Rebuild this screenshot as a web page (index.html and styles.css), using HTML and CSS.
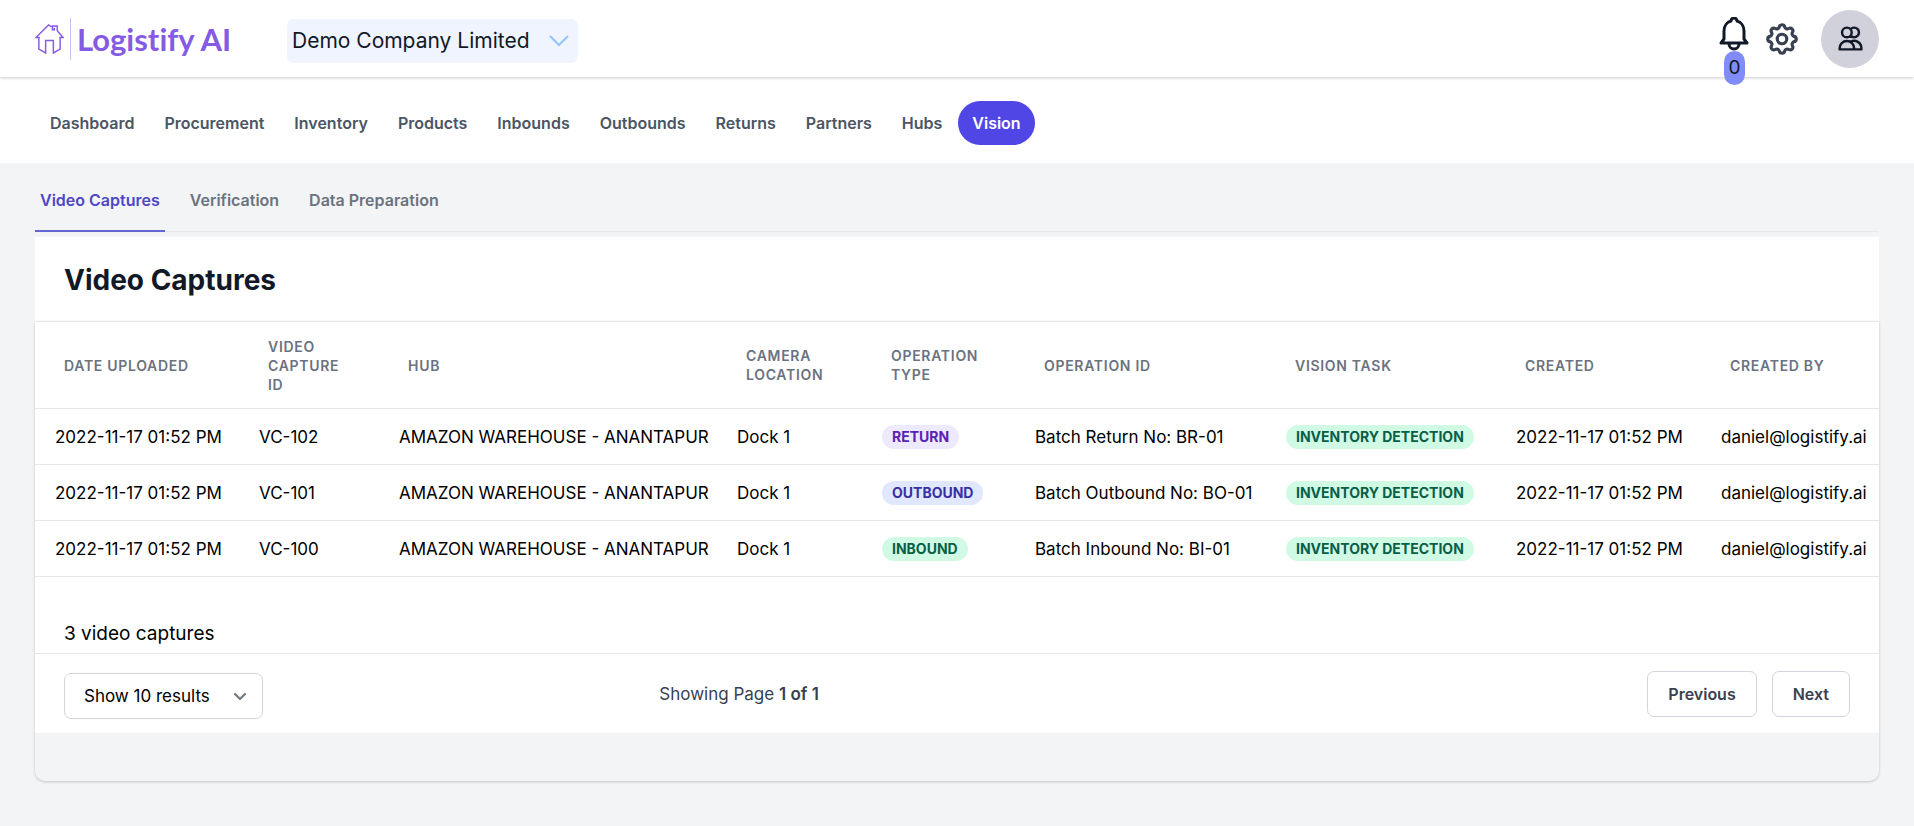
FILE: index.html
```html
<!DOCTYPE html>
<html lang="en">
<head>
  <meta charset="UTF-8">
  <title>Video Captures - Logistify AI</title>
  <meta name="viewport" content="width=device-width, initial-scale=1">
  <link rel="stylesheet" href="styles.css">
</head>
<body>
  <header class="topbar">
    <a class="logo" href="#">
      <svg class="logo-house" viewBox="0 0 30 32" fill="none" stroke="currentColor" stroke-width="1.5">
        <path d="M4 15v12l7 4V18h8v13l7-4V15M5 15H1L14 2l3 2M25 15h4l-6-7V3h-5v4h2V5"/>
      </svg>
      <span class="logo-line"></span>
      <span class="logo-text">Logistify AI</span>
    </a>
    <div class="company">
      <select class="company-select" aria-label="Company">
        <option>Demo Company Limited</option>
      </select>
      <svg class="company-arrow" viewBox="0 0 20 12" fill="none" stroke="currentColor" stroke-width="2"><path d="M1 1l9 9 9-9"/></svg>
    </div>
    <div class="actions">
      <button class="bell" aria-label="Notifications">
        <svg class="bell-icon" viewBox="0 0 30 34" fill="none" stroke="currentColor" stroke-width="3" stroke-linecap="round" stroke-linejoin="round">
          <path d="M2 26l3-4v-8c0-5 3-9 7-10a3 3 0 0 1 6 0c4 1 7 5 7 10v8l3 4zM10 27a5 5 0 0 0 10 0"/>
        </svg>
        <span class="bell-count">0</span>
      </button>
      <button class="gear" aria-label="Settings">
        <svg class="gear-icon" viewBox="0 0 24 24" fill="none" stroke="currentColor" stroke-width="2" stroke-linecap="round" stroke-linejoin="round">
          <path d="M10.325 4.317c.426-1.756 2.924-1.756 3.35 0a1.724 1.724 0 0 0 2.573 1.066c1.543-.94 3.31.826 2.37 2.37a1.724 1.724 0 0 0 1.065 2.572c1.756.426 1.756 2.924 0 3.35a1.724 1.724 0 0 0-1.066 2.573c.94 1.543-.826 3.31-2.37 2.37a1.724 1.724 0 0 0-2.572 1.065c-.426 1.756-2.924 1.756-3.35 0a1.724 1.724 0 0 0-2.573-1.066c-1.543.94-3.31-.826-2.37-2.37a1.724 1.724 0 0 0-1.065-2.572c-1.756-.426-1.756-2.924 0-3.35a1.724 1.724 0 0 0 1.066-2.573c-.94-1.543.826-3.31 2.37-2.37.996.608 2.296.07 2.572-1.065z"/>
          <circle cx="12" cy="12" r="3"/>
        </svg>
      </button>
      <button class="avatar" aria-label="Account">
        <svg class="avatar-icon" viewBox="0 0 24 24" fill="none" stroke="currentColor" stroke-width="2" stroke-linecap="round" stroke-linejoin="round">
          <path d="M12 4.354a4 4 0 1 1 0 5.292M15 21H3v-1a6 6 0 0 1 12 0v1zm0 0h6v-1a6 6 0 0 0-9-5.197M13 7a4 4 0 1 1-8 0 4 4 0 0 1 8 0z"/>
        </svg>
      </button>
    </div>
  </header>

  <nav class="nav">
    <a href="#">Dashboard</a>
    <a href="#">Procurement</a>
    <a href="#">Inventory</a>
    <a href="#">Products</a>
    <a href="#">Inbounds</a>
    <a href="#">Outbounds</a>
    <a href="#">Returns</a>
    <a href="#">Partners</a>
    <a href="#">Hubs</a>
    <a href="#" class="active">Vision</a>
  </nav>

  <main class="content">
    <nav class="tabs">
      <a href="#" class="active">Video Captures</a>
      <a href="#">Verification</a>
      <a href="#">Data Preparation</a>
    </nav>

    <div class="title-box">
      <h1>Video Captures</h1>
    </div>

    <section class="card">
      <table class="captures">
        <colgroup>
          <col class="col-date">
          <col class="col-id">
          <col class="col-hub">
          <col class="col-camera">
          <col class="col-type">
          <col class="col-operation">
          <col class="col-task">
          <col class="col-created">
          <col class="col-by">
        </colgroup>
        <thead>
          <tr>
            <th>Date Uploaded</th>
            <th>Video Capture ID</th>
            <th>Hub</th>
            <th>Camera Location</th>
            <th>Operation Type</th>
            <th>Operation ID</th>
            <th>Vision Task</th>
            <th>Created</th>
            <th>Created By</th>
          </tr>
        </thead>
        <tbody>
          <tr>
            <td>2022-11-17 01:52 PM</td>
            <td>VC-102</td>
            <td>AMAZON WAREHOUSE - ANANTAPUR</td>
            <td>Dock 1</td>
            <td><span class="badge purple">RETURN</span></td>
            <td>Batch Return No: BR-01</td>
            <td><span class="badge green">INVENTORY DETECTION</span></td>
            <td>2022-11-17 01:52 PM</td>
            <td>daniel@logistify.ai</td>
          </tr>
          <tr>
            <td>2022-11-17 01:52 PM</td>
            <td>VC-101</td>
            <td>AMAZON WAREHOUSE - ANANTAPUR</td>
            <td>Dock 1</td>
            <td><span class="badge indigo">OUTBOUND</span></td>
            <td>Batch Outbound No: BO-01</td>
            <td><span class="badge green">INVENTORY DETECTION</span></td>
            <td>2022-11-17 01:52 PM</td>
            <td>daniel@logistify.ai</td>
          </tr>
          <tr>
            <td>2022-11-17 01:52 PM</td>
            <td>VC-100</td>
            <td>AMAZON WAREHOUSE - ANANTAPUR</td>
            <td>Dock 1</td>
            <td><span class="badge green">INBOUND</span></td>
            <td>Batch Inbound No: BI-01</td>
            <td><span class="badge green">INVENTORY DETECTION</span></td>
            <td>2022-11-17 01:52 PM</td>
            <td>daniel@logistify.ai</td>
          </tr>
        </tbody>
      </table>

      <p class="total">3 video captures</p>

      <div class="pager">
        <div class="page-size">
          <select class="page-size-select" aria-label="Results per page">
            <option>Show 10 results</option>
          </select>
          <svg class="page-size-arrow" viewBox="0 0 14 9" fill="none" stroke="currentColor" stroke-width="2" stroke-linecap="round" stroke-linejoin="round"><path d="M2 2l5 5 5-5"/></svg>
        </div>
        <p class="page-info">Showing Page <b>1 of 1</b></p>
        <div class="page-buttons">
          <button>Previous</button>
          <button>Next</button>
        </div>
      </div>
    </section>
  </main>
</body>
</html>
```
FILE: styles.css
```css
* {
  box-sizing: border-box;
}
body {
  margin: 0;
  background: #f3f4f6;
  color: #000;
  font-family: Inter, "Liberation Sans", sans-serif;
  font-size: 17px;
  line-height: 24px;
}
a {
  text-decoration: none;
}
button, select {
  font: inherit;
  cursor: pointer;
}
h1, p {
  margin: 0;
}

/* top bar */
.topbar {
  position: relative;
  display: flex;
  align-items: center;
  height: 77px;
  padding: 0 35px;
  background: #fff;
  box-shadow: 0 1px 3px rgba(0, 0, 0, 0.2);
}
.logo {
  display: flex;
  align-items: center;
  width: 252px;
  color: #865be4;
}
.logo-house {
  width: 29px;
  height: 31px;
}
.logo-line {
  width: 1px;
  height: 42px;
  margin: 0 6px;
  background: #cdbdf3;
}
.logo-text {
  font-family: Lato, sans-serif;
  font-size: 31px;
  font-weight: 700;
  font-variant-ligatures: none;
  line-height: 40px;
}
.company {
  position: relative;
  margin-top: 5px;
}
.company-select {
  appearance: none;
  width: 291px;
  height: 44px;
  padding: 0 5px;
  border: none;
  border-radius: 7px;
  background: #eff4ff;
  color: #111827;
  font-size: 21px;
}
.company-arrow {
  position: absolute;
  right: 9px;
  top: 16px;
  width: 20px;
  height: 12px;
  color: #93c5fd;
  pointer-events: none;
}
.actions {
  display: flex;
  align-items: center;
  margin-left: auto;
}
.actions button {
  padding: 0;
  border: none;
  background: none;
}
.actions .bell {
  position: relative;
  height: 34px;
  margin: 0 14px 10px 0;
  color: #111827;
}
.bell-icon {
  display: block;
  width: 30px;
  height: 34px;
}
.bell-count {
  position: absolute;
  top: 34px;
  left: 5px;
  width: 21px;
  border-radius: 11px;
  background: #818cf8;
  font-size: 19px;
  line-height: 34px;
}
.actions .gear {
  margin-right: 20px;
  color: #374151;
}
.gear-icon {
  display: block;
  width: 38px;
  height: 38px;
}
.actions .avatar {
  display: flex;
  align-items: center;
  justify-content: center;
  width: 58px;
  height: 58px;
  border-radius: 50%;
  background: #d1d1db;
  color: #111827;
}
.avatar-icon {
  width: 29px;
  height: 29px;
}

/* main navigation */
.nav {
  display: flex;
  gap: 2px;
  padding: 24px 36px 18px;
  background: #fff;
}
.nav a {
  padding: 10px 14px;
  border-radius: 22px;
  color: #4b5563;
  font-size: 16px;
  font-weight: 600;
}
.nav a.active {
  background: #4f46e5;
  color: #fff;
}

.content {
  padding: 0 35px 46px;
}
.tabs {
  display: flex;
  gap: 20px;
  border-bottom: 1px solid #e5e7eb;
}
.tabs a {
  margin-bottom: -1px;
  padding: 25px 5px 18px;
  border-bottom: 2px solid transparent;
  color: #6b7280;
  font-size: 16px;
  font-weight: 600;
}
.tabs a.active {
  border-color: #6366d1;
  color: #4f46c5;
}

.title-box {
  margin-top: 5px;
  padding: 25px 29px 23px;
  background: #fff;
}
h1 {
  color: #111827;
  font-size: 28px;
  font-weight: 700;
  line-height: 36px;
}

.card {
  padding-bottom: 48px;
  border-radius: 0 0 10px 10px;
  box-shadow: 0 1px 3px rgba(0, 0, 0, 0.2);
}

/* table */
.captures {
  width: 100%;
  table-layout: fixed;
  border-collapse: collapse;
  background: #fff;
}
.captures tr {
  border-top: 1px solid #e5e7eb;
  border-bottom: 1px solid #e5e7eb;
}
.captures th {
  height: 87px;
  padding: 14px 29px;
  color: #6b7280;
  font-size: 14px;
  font-weight: 600;
  line-height: 19px;
  letter-spacing: 0.05em;
  text-align: left;
  text-transform: uppercase;
}
.captures td {
  height: 56px;
  padding: 0 0 0 20px;
  white-space: nowrap;
}
.col-date { width: 204px; }
.col-id { width: 140px; }
.col-hub { width: 338px; }
.col-camera { width: 145px; }
.col-type { width: 153px; }
.col-operation { width: 251px; }
.col-task { width: 230px; }
.col-created { width: 205px; }
.col-by { width: 178px; }

.badge {
  display: inline-block;
  padding: 0 10px;
  border-radius: 12px;
  font-size: 14px;
  font-weight: 700;
  line-height: 24px;
  vertical-align: middle;
}
.purple { background: #ede9fe; color: #5b21b6; }
.indigo { background: #e0e7ff; color: #3730a3; }
.green { background: #d1fae5; color: #065f46; }

.total {
  padding: 42px 29px 5px;
  background: #fff;
  font-size: 19px;
  line-height: 29px;
}

/* pager */
.pager {
  display: grid;
  grid-template-columns: repeat(3, 1fr);
  padding: 17px 29px 14px;
  border-top: 1px solid #e5e7eb;
  background: #fff;
}
.page-size {
  position: relative;
  justify-self: start;
  margin-top: 2px;
}
.page-size-select {
  appearance: none;
  display: block;
  width: 199px;
  height: 46px;
  padding: 0 19px;
  border: 1px solid #d1d5db;
  border-radius: 7px;
  background: #fff;
  color: #000;
}
.page-size-arrow {
  position: absolute;
  top: 19px;
  right: 16px;
  width: 14px;
  height: 9px;
  color: #6b7280;
  pointer-events: none;
}
.page-info {
  color: #374151;
  line-height: 46px;
}
.page-info b {
  font-weight: 600;
}
.page-buttons {
  display: flex;
  gap: 15px;
  align-items: start;
  justify-self: end;
}
.page-buttons button {
  height: 46px;
  padding: 0 20px;
  border: 1px solid #d1d5db;
  border-radius: 7px;
  background: #fff;
  color: #374151;
  font-size: 16px;
  font-weight: 600;
}
```
